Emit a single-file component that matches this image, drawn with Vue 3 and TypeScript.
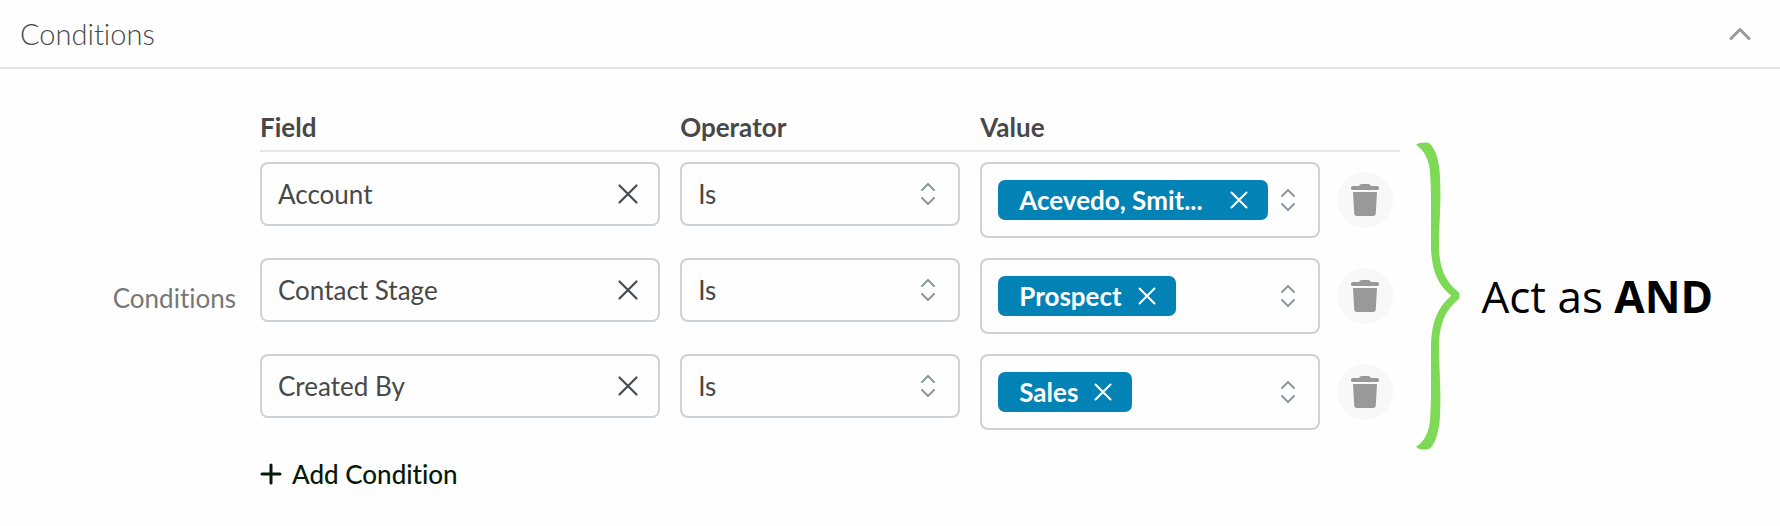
<script setup lang="ts">
import { ref } from 'vue'

interface Condition {
  id: number
  field: string
  operator: string
  value: string
  wide: boolean
}

const open = ref(true)
const nextId = ref(4)
const conditions = ref<Condition[]>([
  { id: 1, field: 'Account', operator: 'Is', value: 'Acevedo, Smit...', wide: true },
  { id: 2, field: 'Contact Stage', operator: 'Is', value: 'Prospect', wide: false },
  { id: 3, field: 'Created By', operator: 'Is', value: 'Sales', wide: false },
])

function addCondition(): void {
  conditions.value.push({ id: nextId.value++, field: '', operator: 'Is', value: '', wide: false })
}

function removeCondition(id: number): void {
  conditions.value = conditions.value.filter((c) => c.id !== id)
}
</script>

<template>
  <section class="panel">
    <header class="panel-header">
      <h2 class="panel-title">Conditions</h2>
      <button class="icon-button" type="button" aria-label="Toggle section" :aria-expanded="open" @click="open = !open">
        <svg width="22" height="14" viewBox="0 0 22 14" fill="none" stroke="#999" stroke-width="3" stroke-linecap="round" stroke-linejoin="round">
          <path d="M2 11.500 11 2.500 20 11.500" />
        </svg>
      </button>
    </header>

    <div v-if="open" class="panel-body">
      <div id="conditions-label" class="side-label">Conditions</div>

      <div class="editor">
        <table class="conditions" aria-labelledby="conditions-label">
          <thead>
            <tr class="line head-line">
              <th scope="col">Field</th>
              <th scope="col">Operator</th>
              <th scope="col">Value</th>
              <td></td>
            </tr>
          </thead>
          <tbody>
            <tr v-for="c in conditions" :key="c.id" class="line">
              <td class="cell">
                <div class="control">
                  <input v-model="c.field" class="field-input" type="text" aria-label="Field" />
                  <button class="icon-button" type="button" aria-label="Clear field" @click="c.field = ''">
                    <svg width="20" height="20" viewBox="0 0 20 20" fill="none" stroke="#464c55" stroke-width="2.200" stroke-linecap="round">
                      <path d="M1.500 1.500 18.500 18.500M18.500 1.500 1.500 18.500" />
                    </svg>
                  </button>
                </div>
              </td>
              <td class="cell">
                <div class="control control-select">
                  <select v-model="c.operator" class="operator-select" aria-label="Operator">
                    <option>Is</option>
                    <option>Is not</option>
                  </select>
                  <svg class="select-arrows" width="14" height="22" viewBox="0 0 14 22" fill="none" stroke="#8d96a0" stroke-width="2" stroke-linecap="round" stroke-linejoin="round">
                    <path d="M1 7 7 1 13 7M1 15 7 21 13 15" />
                  </svg>
                </div>
              </td>
              <td class="cell cell-value">
                <div class="control control-value">
                  <div class="chips">
                    <span v-if="c.value" class="chip" :class="{ 'chip-wide': c.wide }">
                      <span class="chip-text">{{ c.value }}</span>
                      <button class="icon-button" type="button" aria-label="Remove value" @click="c.value = ''">
                        <svg width="18" height="18" viewBox="0 0 18 18" fill="none" stroke="#fff" stroke-width="2" stroke-linecap="round">
                          <path d="M1.500 1.500 16.500 16.500M16.500 1.500 1.500 16.500" />
                        </svg>
                      </button>
                    </span>
                  </div>
                  <button class="icon-button" type="button" aria-label="Choose value">
                    <svg width="14" height="22" viewBox="0 0 14 22" fill="none" stroke="#8d96a0" stroke-width="2" stroke-linecap="round" stroke-linejoin="round">
                      <path d="M1 7 7 1 13 7M1 15 7 21 13 15" />
                    </svg>
                  </button>
                </div>
              </td>
              <td class="cell cell-delete">
                <button class="delete-button" type="button" aria-label="Delete condition" @click="removeCondition(c.id)">
                  <svg width="28" height="32" viewBox="0 0 28 32" fill="#999">
                    <path d="M8 2C8.800.600 9.800 0 11 0h6c1.200 0 2.200.600 3 2h6a2 2 0 0 1 2 2v.500A1.500 1.500 0 0 1 26.500 6h-25A1.500 1.500 0 0 1 0 4.500V4a2 2 0 0 1 2-2z" />
                    <path d="M2 8h24l-1.200 21.300A2.800 2.800 0 0 1 22 32H6a2.800 2.800 0 0 1-2.800-2.700z" />
                  </svg>
                </button>
              </td>
            </tr>
          </tbody>
        </table>

        <button class="add-button" type="button" @click="addCondition">
          <svg width="22" height="22" viewBox="0 0 22 22" fill="none" stroke="#061a08" stroke-width="3" stroke-linecap="round">
            <path d="M11 2V20M2 11H20" />
          </svg>
          Add Condition
        </button>
      </div>

      <aside class="note">
        <svg class="brace" width="44" height="308" viewBox="0 0 132 924" fill="#7ed957">
          <path d="M0 8C6 3 20 1 36 2C54 10 71 50 72 106C76 180 69 240 69 320C71 385 92 423 130 452V470C92 499 71 539 69 604C69 684 76 744 72 818C71 874 54 912 38 922C20 924 6 922 0 914C24 900 42 872 43 818C47 744 44 684 45 604C48 540 64 496 106 461C64 428 48 384 45 320C44 240 47 180 43 106C42 52 24 24 0 8Z" />
        </svg>
        <p class="note-text">Act as <strong>AND</strong></p>
      </aside>
    </div>
  </section>
</template>

<style>
body {
  margin: 0;
  background: #fefefe;
}
</style>

<style scoped>
.panel {
  font-family: Lato, "Open Sans", sans-serif;
  font-size: 26px;
  font-variant-ligatures: none;
  line-height: 30px;
  color: #484848;
}

.panel * {
  box-sizing: border-box;
}

.panel-header {
  display: flex;
  align-items: center;
  justify-content: space-between;
  height: 69px;
  padding: 0 29px 0 20px;
  border-bottom: 2px solid #e5e5eb;
}

.panel-title {
  margin: 0;
  font-size: 29px;
  font-weight: 300;
}

.icon-button {
  display: flex;
  flex: none;
  padding: 0;
  border: 0;
  background: none;
  cursor: pointer;
}

.panel-body {
  display: flex;
  align-items: center;
  padding: 43px 67px 24px 20px;
}

.side-label {
  flex: none;
  width: 216px;
  padding-bottom: 6px;
  text-align: right;
  color: #777;
}

.editor {
  flex: 1;
  min-width: 0;
  margin-left: 24px;
}

.conditions {
  display: block;
  border-collapse: collapse;
}

.conditions thead,
.conditions tbody {
  display: block;
}

.line {
  display: grid;
  grid-template-columns: 420fr 300fr 357fr 63px;
  align-items: start;
}

.head-line {
  padding-bottom: 8px;
  border-bottom: 2px solid #e5e5eb;
}

.line th {
  padding: 0;
  text-align: left;
  font-weight: 700;
}

.cell {
  min-width: 0;
  padding: 10px 20px 10px 0;
}

.cell-value {
  padding-right: 17px;
}

.cell-delete {
  align-self: center;
  padding-right: 0;
}

.control {
  display: flex;
  align-items: center;
  height: 64px;
  padding: 0 20px 0 16px;
  border: 2px solid #cdd2d9;
  border-radius: 8px;
}

.control-select {
  position: relative;
  padding: 0;
}

.control-value {
  gap: 13px;
  height: 76px;
  padding-right: 23px;
}

.field-input,
.operator-select {
  flex: 1;
  min-width: 0;
  height: 100%;
  padding: 0;
  border: 0;
  outline: 0;
  background: none;
  color: inherit;
  font: inherit;
  font-variant-ligatures: none;
}

.operator-select {
  appearance: none;
  padding: 0 48px 0 16px;
}

.select-arrows {
  position: absolute;
  top: 19px;
  right: 23px;
  pointer-events: none;
}

.chips {
  display: flex;
  flex: 1;
  min-width: 0;
}

.chip {
  display: flex;
  align-items: center;
  gap: 16px;
  min-width: 0;
  height: 40px;
  padding: 0 20px 0 21px;
  border-radius: 7px;
  background: #0282b5;
  color: #fff;
  font-weight: 700;
}

.chip-wide {
  flex: 1;
}

.chip-text {
  flex: 1;
  min-width: 0;
  overflow: hidden;
  white-space: nowrap;
}

.delete-button {
  display: flex;
  align-items: center;
  justify-content: center;
  width: 56px;
  height: 56px;
  padding: 0;
  border: 0;
  border-radius: 50%;
  background: #f8f8f8;
  cursor: pointer;
}

.add-button {
  display: flex;
  align-items: center;
  gap: 10px;
  margin-top: 19px;
  padding: 0;
  border: 0;
  background: none;
  color: #061a08;
  font: inherit;
  font-variant-ligatures: none;
  font-weight: 500;
  cursor: pointer;
}

.note {
  display: flex;
  flex: none;
  align-self: flex-start;
  align-items: center;
  gap: 21px;
  margin-left: 16px;
  padding-top: 30px;
}

.brace {
  flex: none;
}

.note-text {
  margin: 0;
  font-family: "Open Sans", sans-serif;
  font-size: 44px;
  line-height: 60px;
  white-space: nowrap;
  color: #000;
}
</style>
